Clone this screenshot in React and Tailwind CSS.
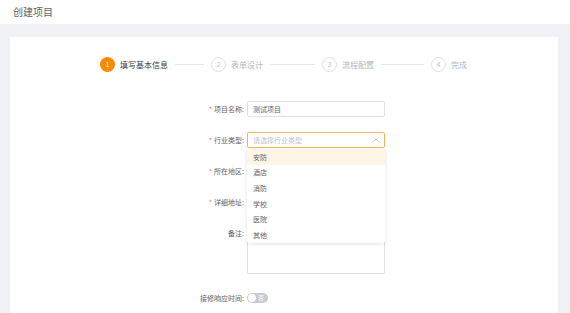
import React from 'react';

const steps = [
    { n: 1, label: '填写基本信息', active: true },
    { n: 2, label: '表单设计' },
    { n: 3, label: '流程配置' },
    { n: 4, label: '完成' },
];

const options = ['安防', '酒店', '消防', '学校', '医院', '其他'];

const Label = ({ text, required }) => (
    <div className="w-[237px] shrink-0 flex justify-end items-center h-[16px] pr-[3px] text-[7px] text-[#606266]">
        {required && <span className="text-[#f56c6c] mr-[2px]">*</span>}
        {text}:
    </div>
);

const App = () => {
    return (
        <div className="w-[570px] h-[313px] overflow-hidden bg-[#f0f2f5] flex flex-col" style={{ fontFamily: '"Noto Sans CJK SC", "Noto Sans", sans-serif' }}>
            {/* Header */}
            <div className="h-[24px] shrink-0 bg-white flex items-center pl-[13px]">
                <span className="text-[10px] text-[#606266] leading-none">创建项目</span>
            </div>

            {/* Card */}
            <div className="flex-1 mt-[13px] ml-[10px] mr-[12px] bg-white">
                {/* Steps */}
                <div className="flex items-center pt-[20px] pl-[90px]">
                    {steps.map((s, i) => (
                        <React.Fragment key={s.n}>
                            <div className="flex items-center gap-[5px]">
                                <div className={`w-[15px] h-[15px] rounded-full flex items-center justify-center text-[7px] leading-none ${s.active ? 'bg-[#ff8a00] text-white' : 'border border-[#dcdfe6] text-[#c0c4cc]'}`}>
                                    {s.n}
                                </div>
                                <span className={`text-[8px] leading-none ${s.active ? 'text-[#3a3c40]' : 'text-[#b4b7bd]'}`}>{s.label}</span>
                            </div>
                            {i < steps.length - 1 && (
                                <div className={`h-px bg-[#e4e7ed] mx-[7px] ${i === 0 ? 'w-[29px]' : i === 1 ? 'w-[45px]' : 'w-[43px]'}`} />
                            )}
                        </React.Fragment>
                    ))}
                </div>

                {/* Form */}
                <div className="pt-[29px] flex flex-col">
                    <div className="flex items-center">
                        <Label text="项目名称" required />
                        <div className="w-[138px] h-[16px] border border-[#dcdfe6] rounded-[2px] flex items-center px-[5px] text-[7px] text-[#606266]">测试项目</div>
                    </div>

                    <div className="flex items-center mt-[15px]">
                        <Label text="行业类型" required />
                        <div className="relative w-[138px]">
                            <div className="h-[16px] border border-[#f5b45a] rounded-[2px] flex items-center justify-between px-[5px] text-[7px] text-[#c0c4cc]">
                                请选择行业类型
                                <svg width="6" height="4" viewBox="0 0 6 4" fill="none" stroke="#a8abb2" strokeWidth="0.8"><path d="M0.5 3.5 L3 1 L5.5 3.5" /></svg>
                            </div>
                            {/* Dropdown */}
                            <div className="absolute left-0 top-[17px] w-[138px] bg-white rounded-[2px] shadow-[0_1px_4px_rgba(0,0,0,0.12)] z-10">
                                {options.map((o, i) => (
                                    <div key={o} className={`h-[15.7px] flex items-center px-[6px] text-[7px] ${i === 0 ? 'bg-[#fdf5e6] text-[#606266]' : 'text-[#606266]'}`}>{o}</div>
                                ))}
                            </div>
                        </div>
                    </div>

                    <div className="flex items-center mt-[15px]">
                        <Label text="所在地区" required />
                        <div className="w-[138px] h-[16px] border border-[#dcdfe6] rounded-[2px]" />
                    </div>

                    <div className="flex items-center mt-[15px]">
                        <Label text="详细地址" required />
                        <div className="w-[138px] h-[16px] border border-[#dcdfe6] rounded-[2px]" />
                    </div>

                    <div className="flex items-start mt-[15px]">
                        <Label text="备注" />
                        <div className="w-[138px] h-[49px] border border-[#dcdfe6] rounded-[2px]" />
                    </div>

                    <div className="flex items-center mt-[16px]">
                        <Label text="接修响应时间" />
                        <div className="w-[21px] h-[10px] rounded-full bg-[#c8cbd0] flex items-center justify-between pl-[1px] pr-[4px]">
                            <div className="w-[8px] h-[8px] rounded-full bg-white" />
                            <span className="text-[6px] leading-none text-white">否</span>
                        </div>
                    </div>
                </div>
            </div>
        </div>
    );
};

export default App;
